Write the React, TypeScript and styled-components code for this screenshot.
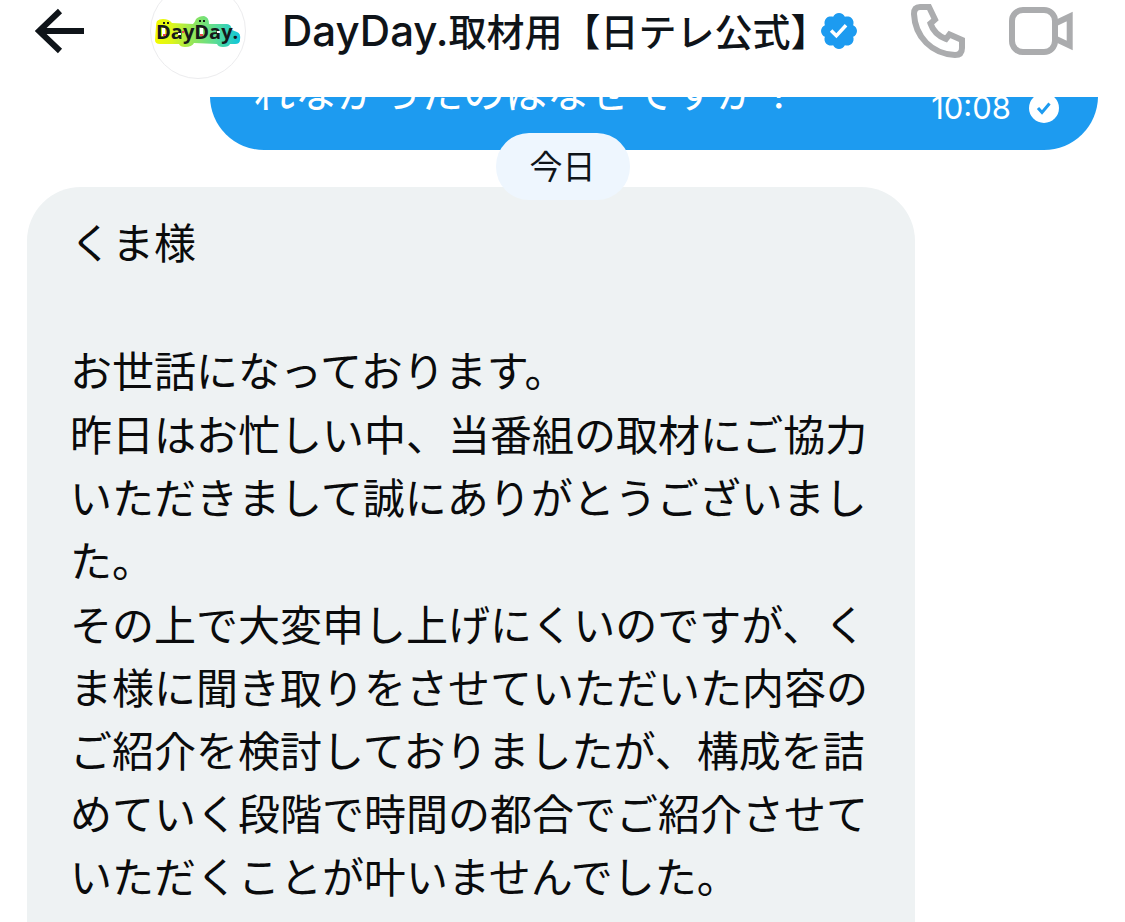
import React from "react";
import styled, { createGlobalStyle } from "styled-components";

const GlobalStyle = createGlobalStyle`
  * { box-sizing: border-box; }
  html, body { margin: 0; background: #fff; }
  body {
    color: #0f1419;
    font-family: Inter, "Noto Sans CJK JP", sans-serif;
    text-spacing-trim: space-all;
  }
  p { margin: 0; }
`;

const Screen = styled.div`
  display: flex;
  flex-direction: column;
  height: 100vh;
  overflow: hidden;
`;

const Header = styled.header`
  display: flex;
  flex: none;
  align-items: center;
  height: 97px;
  padding: 0 52px 35px 35px;
  overflow: hidden;
  background: #fff;
`;

const IconButton = styled.button`
  display: flex;
  flex: none;
  padding: 0;
  border: 0;
  background: none;
  color: inherit;
  cursor: pointer;
  svg { display: block; }
`;

const Avatar = styled.div`
  flex: none;
  width: 96px;
  height: 96px;
  margin: 0 36px 0 66px;
  border: 1px solid #ececee;
  border-radius: 50%;
  overflow: hidden;
  svg { display: block; }
`;

const Title = styled.h1`
  display: flex;
  align-items: baseline;
  margin: 0 -7px 0 0;
  font-size: 38px;
  line-height: 60px;
  font-weight: 500;
  white-space: nowrap;
`;

const Latin = styled.span`
  font-size: 42px;
`;

const Verified = styled.svg`
  flex: none;
  fill: #1d9bf0;
`;

const Actions = styled.div`
  display: flex;
  align-items: center;
  gap: 44px;
  margin-left: auto;
  color: #abacae;
`;

const Thread = styled.main`
  position: relative;
  flex: 1;
  display: flex;
  flex-direction: column;
  gap: 37px;
  min-height: 0;
  overflow: hidden;
`;

const Bubble = styled.article<{ $sent?: boolean }>`
  flex: none;
  margin: ${(p) => (p.$sent ? "-76px 27px 0 210px" : "0 210px 0 27px")};
  padding: ${(p) => (p.$sent ? "40px 39px 26px 43px" : "25px 45px 90px 43px")};
  border-radius: 54px;
  background: ${(p) => (p.$sent ? "#1d9bf0" : "#eef2f3")};
  color: ${(p) => (p.$sent ? "#fff" : "#0a0b0c")};
  font-size: 42px;
  line-height: 63px;
`;

const SentRow = styled.div`
  display: flex;
  justify-content: space-between;
  align-items: flex-end;
`;

const Receipt = styled.div`
  display: flex;
  align-items: center;
  gap: 18px;
  font-size: 31px;
  line-height: 32px;
  svg { display: block; }
`;

const Letter = styled.div`
  display: flex;
  flex-direction: column;
  gap: 1px;
`;

const Line = styled.p`
  min-height: 63px;
`;

const DateRow = styled.div`
  position: absolute;
  top: 36px;
  left: 0;
  right: 0;
  display: flex;
  justify-content: center;
`;

const DatePill = styled.time`
  padding: 1px 34px 0;
  border-radius: 33px;
  background: #eef6fe;
  font-size: 33px;
  line-height: 66px;
`;

const DayLogo = () => (
  <svg width="94" height="94" viewBox="0 0 94 94" role="img" aria-label="DayDay.">
    <defs>
      <linearGradient id="rainbow" x1="4" x2="90" y1="0" y2="0" gradientUnits="userSpaceOnUse">
        <stop offset="0" stopColor="#f2fb00" />
        <stop offset="0.2" stopColor="#dcf51c" />
        <stop offset="0.45" stopColor="#90e55c" />
        <stop offset="0.7" stopColor="#5bdc94" />
        <stop offset="1" stopColor="#0bc5df" />
      </linearGradient>
    </defs>
    <path
      fill="url(#rainbow)"
      d="M5 42Q5 39 6 37Q8 35 12 35Q18 35 21 39L42 40Q44 38 45 35Q48 32 53 32Q58 33 58 40L76 40Q80 40 81 46L86 48Q90 49 89 56Q89 60 84 60L79 60Q78 63 72 63Q67 63 66 60L43 59Q41 63 34 63Q29 63 28 60L9 60Q4 60 4 56Z"
    />
    <text x="5" y="55" fontFamily="Open Sans, sans-serif" fontSize="20" fontWeight="700" fill="#16191a">
      DayDay.
    </text>
    <path fill="#fff" d="M11 44h3v8h-3zM49 44h3v7h-3z" />
    <path fill="#e94b4b" d="M12 50h3v2h-3zM49 50h3v2h-3zM31 47h2v2h-2z" />
    <path fill="#fff" d="M27 49h3v2h-3zM66 47h3v2h-3z" />
    <path fill="#16191a" d="M12 38h2v2h-2zM16 38h2v2h-2zM48 36h2v2h-2zM52 36h2v2h-2z" />
  </svg>
);

export default function App() {
  return (
    <>
      <GlobalStyle />
      <Screen>
        <Header>
          <IconButton aria-label="戻る">
            <svg width="49" height="46" viewBox="0 0 49 46" fill="none" stroke="currentColor" strokeWidth="6">
              <path d="M4 23H49M25 3L4 23L25 43" />
            </svg>
          </IconButton>
          <Avatar>
            <DayLogo />
          </Avatar>
          <Title>
            <Latin>DayDay.</Latin>取材用【日テレ公式】
          </Title>
          <Verified width="36" height="36" viewBox="1.6 1.6 18.8 18.8" role="img" aria-label="認証済み">
            <path d="M20.396 11c-.018-.646-.215-1.275-.57-1.816-.354-.54-.852-.972-1.438-1.246.223-.607.27-1.264.14-1.897-.131-.634-.437-1.218-.882-1.687-.47-.445-1.053-.75-1.687-.882-.633-.13-1.29-.083-1.897.14-.273-.587-.704-1.086-1.245-1.44S11.647 1.62 11 1.604c-.646.017-1.273.213-1.813.568s-.969.854-1.24 1.44c-.608-.223-1.267-.272-1.902-.14-.635.13-1.22.436-1.69.882-.445.47-.749 1.055-.878 1.688-.13.633-.08 1.29.144 1.896-.587.274-1.087.705-1.443 1.245-.356.54-.555 1.17-.574 1.817.02.647.218 1.276.574 1.817.356.54.856.972 1.443 1.245-.224.606-.274 1.263-.144 1.896.13.634.433 1.218.877 1.688.47.443 1.054.747 1.687.878.633.132 1.29.084 1.897-.136.274.586.705 1.084 1.246 1.439.54.354 1.17.551 1.816.569.647-.016 1.276-.213 1.817-.567s.972-.854 1.245-1.44c.604.239 1.266.296 1.903.164.636-.132 1.22-.447 1.68-.907.46-.46.776-1.044.908-1.681s.075-1.299-.165-1.903c.586-.274 1.084-.705 1.439-1.246.354-.54.551-1.17.569-1.816zM9.662 14.85l-3.429-3.428 1.293-1.302 2.072 2.072 4.4-4.794 1.347 1.246z" />
          </Verified>
          <Actions>
            <IconButton aria-label="音声通話">
              <svg width="54" height="54" viewBox="0 0 54 54" fill="none" stroke="currentColor" strokeWidth="6">
                <path d="M9 3H18L24 15.500L19.500 19.500C22 27 27 32 35 35L38.500 30.500L51 36V44Q51 51 44 51C21 50 4 33 3 10Q3 3 9 3Z" />
              </svg>
            </IconButton>
            <IconButton aria-label="ビデオ通話">
              <svg width="64" height="48" viewBox="0 0 64 48" fill="none" stroke="currentColor" strokeWidth="6">
                <rect x="3" y="3" width="43" height="42" rx="11" />
                <path d="M46 16.500L60.700 9.500V38.500L46 31.500" />
              </svg>
            </IconButton>
          </Actions>
        </Header>
        <Thread>
          <Bubble $sent>
            <SentRow>
              <p>れなかったのはなぜですか？</p>
              <Receipt>
                <time>10:08</time>
                <svg width="30" height="30" viewBox="0 0 30 30" role="img" aria-label="送信済み">
                  <circle cx="15" cy="15" r="15" fill="#fff" />
                  <path d="M9 15L13 19.500L20.500 10.500" fill="none" stroke="#1d9bf0" strokeWidth="3" />
                </svg>
              </Receipt>
            </SentRow>
          </Bubble>
          <Bubble>
            <Letter>
              <Line>くま様</Line>
              <Line />
              <Line>お世話になっております。</Line>
              <Line>昨日はお忙しい中、当番組の取材にご協力いただきまして誠にありがとうございました。</Line>
              <Line>
                その上で大変申し上げにくいのですが、くま様に聞き取りをさせていただいた内容のご紹介を検討しておりましたが、構成を詰めていく段階で時間の都合でご紹介させていただくことが叶いませんでした。
              </Line>
            </Letter>
          </Bubble>
          <DateRow>
            <DatePill>今日</DatePill>
          </DateRow>
        </Thread>
      </Screen>
    </>
  );
}
